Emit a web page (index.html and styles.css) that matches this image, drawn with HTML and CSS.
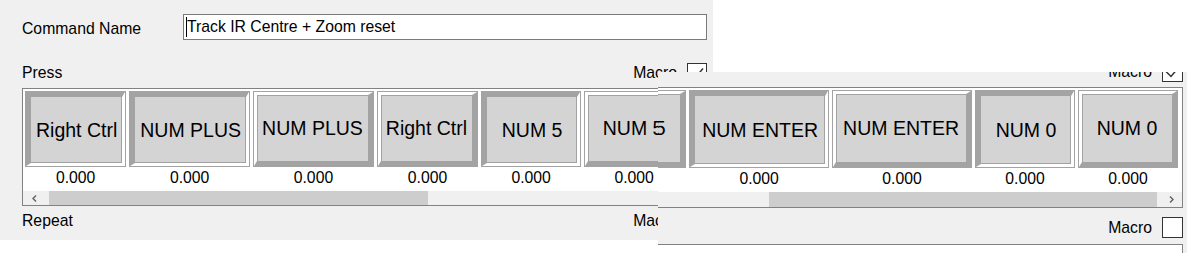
FILE: index.html
```html
<!DOCTYPE html>
<html lang="en">
<head>
    <meta charset="UTF-8">
    <title>Command Editor</title>
    <link rel="stylesheet" href="styles.css">
</head>
<body>
<div class="screen">
    <div class="dialog">
        <div class="name-row">
            <label class="name-label">Command Name</label>
            <div class="name-input"><span class="caret"></span>Track IR Centre + Zoom reset</div>
        </div>
        <div class="head-row">
            <span class="head-title">Press</span>
            <span class="macro">Macro</span>
            <span class="check"><svg width="18" height="18" viewBox="0 0 18 18"><path d="M3 9 L7.5 13.5 L15 4.5" fill="none" stroke="#333" stroke-width="1.5"/></svg></span>
        </div>
        <div class="keybox">
            <div class="keys">
                <div class="key-col"><div class="key down">Right Ctrl</div><div class="val">0.000</div></div>
                <div class="key-col"><div class="key down">NUM PLUS</div><div class="val">0.000</div></div>
                <div class="key-col"><div class="key up">NUM PLUS</div><div class="val">0.000</div></div>
                <div class="key-col"><div class="key up">Right Ctrl</div><div class="val">0.000</div></div>
                <div class="key-col"><div class="key down">NUM 5</div><div class="val">0.000</div></div>
                <div class="key-col"><div class="key up">NUM 5</div><div class="val">0.000</div></div>
                <div class="key-col"><div class="key down">NUM ENTER</div><div class="val">0.000</div></div>
            </div>
            <div class="hscroll">
                <div class="arrow"><svg width="5" height="7" viewBox="0 0 5 7"><path d="M4 0.5 L1 3.5 L4 6.5" fill="none" stroke="#606060" stroke-width="1.4"/></svg></div>
                <div class="thumb"></div>
                <div class="track"></div>
            </div>
        </div>
        <div class="head-row head-row--low">
            <span class="head-title">Repeat</span>
            <span class="macro">Macro</span>
            <span class="check"></span>
        </div>
    </div>

    <!-- second, wider capture of the same dialog lying on top -->
    <div class="dialog dialog-wide">
        <div class="head-row head-row--cut">
            <span class="macro">Macro</span>
            <span class="check"><svg width="19" height="19" viewBox="0 0 19 19"><path d="M3 9.5 L8 14.5 L16 5" fill="none" stroke="#333" stroke-width="1.5"/></svg></span>
        </div>
        <div class="keybox">
            <div class="keys">
                <div class="key-col"><div class="key up">Right Ctrl</div><div class="val">0.000</div></div>
                <div class="key-col"><div class="key down">NUM 5</div><div class="val">0.000</div></div>
                <div class="key-col"><div class="key up">NUM 5</div><div class="val">0.000</div></div>
                <div class="key-col"><div class="key down">NUM ENTER</div><div class="val">0.000</div></div>
                <div class="key-col"><div class="key up">NUM ENTER</div><div class="val">0.000</div></div>
                <div class="key-col"><div class="key down">NUM 0</div><div class="val">0.000</div></div>
                <div class="key-col"><div class="key up">NUM 0</div><div class="val">0.000</div></div>
            </div>
            <div class="hscroll">
                <div class="track"></div>
                <div class="thumb"></div>
                <div class="arrow"><svg width="5" height="7" viewBox="0 0 5 7"><path d="M1 0.5 L4 3.5 L1 6.5" fill="none" stroke="#606060" stroke-width="1.4"/></svg></div>
            </div>
        </div>
        <div class="head-row head-row--next">
            <span class="macro">Macro</span>
            <span class="check"></span>
        </div>
        <div class="lower-box"></div>
    </div>
</div>
</body>
</html>
```

FILE: styles.css
```css
body{
    margin: 0;
    background: #fff;
    color: #000;
    font-family: "Liberation Sans", Arial, sans-serif;
}
.screen{
    position: relative;
    width: 1200px;
    height: 253px;
    overflow: hidden;
}
.dialog{
    box-sizing: border-box;
    width: 713px;
    height: 240px;
    padding: 14px 6px 0 22px;
    background: #f0f0f0;
    font-size: 15.75px;
    line-height: 18px;
}
.name-row{
    display: flex;
    align-items: center;
    height: 26px;
}
.name-label{
    width: 161px;
    margin-top: 4px;
}
.name-input{
    flex: 1;
    box-sizing: border-box;
    height: 26px;
    display: flex;
    align-items: center;
    padding-left: 2px;
    border: 1px solid #7a7a7a;
    background: #fff;
    white-space: nowrap;
}
.caret{
    width: 1px;
    height: 20px;
    background: #000;
}
.head-row{
    display: flex;
    align-items: center;
    height: 20px;
    margin-top: 23px;
}
.head-row--low{
    margin-top: 5px;
}
.head-title{
    margin-right: auto;
}
.macro{
    margin-right: 10px;
}
.check{
    box-sizing: border-box;
    width: 20px;
    height: 20px;
    border: 1px solid #333;
    background: #fff;
}
.check svg{
    display: block;
}
.keybox{
    box-sizing: border-box;
    height: 118px;
    margin-top: 5px;
    border: 1px solid #828282;
    background: #fff;
    overflow: hidden;
}
.keys{
    display: flex;
    gap: 5px;
    padding: 3px 0 0 3px;
}
.key-col{
    flex-shrink: 0;
    display: flex;
    flex-direction: column;
}
.key{
    box-sizing: border-box;
    height: 74px;
    min-width: 98px;
    padding: 0 5px;
    display: flex;
    align-items: center;
    justify-content: center;
    background: #d4d4d4;
    border-style: solid;
    font-size: 19.5px;
    white-space: nowrap;
}
.key.up{
    border-width: 3px 5px 5px 3px;
    border-color: #fff #a3a3a3 #a3a3a3 #fff;
    box-shadow: 0 0 0 1px #a3a3a3, inset 1px 1px #a3a3a3;
}
.key.down{
    border-width: 5px 3px 3px 5px;
    border-color: #a3a3a3 #fff #fff #a3a3a3;
    box-shadow: 0 0 0 1px #a3a3a3, inset -1px -1px #a3a3a3;
}
.val{
    box-sizing: border-box;
    height: 25px;
    padding-top: 3px;
    text-align: center;
    font-size: 15.75px;
    line-height: 18px;
}
.hscroll{
    display: flex;
    height: 14px;
    background: #f0f0f0;
}
.arrow{
    width: 26px;
    display: flex;
    align-items: center;
    justify-content: center;
    padding-right: 3px;
    box-sizing: border-box;
}
.thumb{
    width: 379px;
    background: #cdcdcd;
}
.track{
    flex: 1;
}

/* the wider window laid over the first one */
.dialog-wide{
    position: absolute;
    left: 658px;
    top: 72px;
    width: 529px;
    height: 181px;
    padding: 0 4px 0 0;
    overflow: hidden;
}
.dialog-wide .head-row{
    justify-content: flex-end;
    height: 21px;
}
.dialog-wide .head-row--cut{
    margin-top: -11px;
}
.dialog-wide .head-row--next{
    margin-top: 9px;
}
.dialog-wide .check{
    width: 21px;
    height: 21px;
}
.dialog-wide .keybox{
    height: 121px;
    margin-left: -60px;
}
.dialog-wide .keys{
    justify-content: flex-end;
    padding: 3px 5px 0 0;
}
.dialog-wide .key{
    height: 76px;
    padding: 0 7px;
}
.dialog-wide .hscroll{
    height: 15px;
}
.dialog-wide .thumb{
    width: 388px;
}
.dialog-wide .arrow{
    width: 25px;
    padding: 0 0 0 3px;
}
.lower-box{
    height: 40px;
    margin: 6px 0 0 -60px;
    border-top: 1px solid #828282;
    border-right: 1px solid #828282;
    background: #fff;
}
```
